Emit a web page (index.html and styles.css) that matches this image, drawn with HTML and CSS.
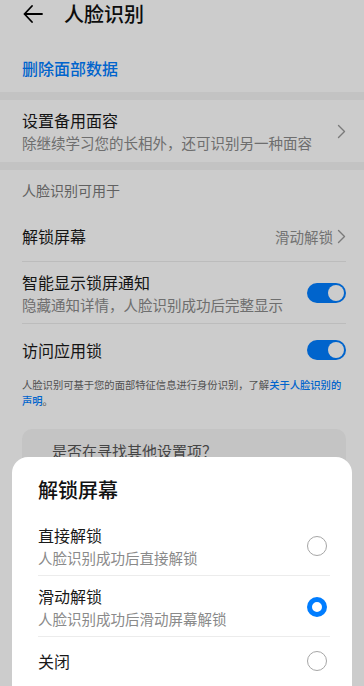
FILE: index.html
```html
<!DOCTYPE html>
<html lang="zh">
<head>
<meta charset="utf-8">
<link rel="stylesheet" href="styles.css">
</head>
<body>
<div class="screen">
  <div class="page">
    <header class="header">
      <svg class="back" width="20" height="18" viewBox="0 0 20 18"><path d="M9 1 L1.5 9 L9 17 M1.5 9 H19" fill="none" stroke="#000" stroke-width="1.8" stroke-linecap="round" stroke-linejoin="round"/></svg>
      <span class="title">人脸识别</span>
    </header>
    <div class="link-row">删除面部数据</div>
    <div class="band"></div>
    <div class="row row-two">
      <div class="texts">
        <div class="main">设置备用面容</div>
        <div class="sub">除继续学习您的长相外，还可识别另一种面容</div>
      </div>
      <svg class="chev" width="9" height="15" viewBox="0 0 9 15"><path d="M1.5 1.5 L7.5 7.5 L1.5 13.5" fill="none" stroke="#999" stroke-width="1.4" stroke-linecap="round" stroke-linejoin="round"/></svg>
    </div>
    <div class="band"></div>
    <div class="section-head">人脸识别可用于</div>
    <div class="group">
      <div class="row row-one divided">
        <div class="main">解锁屏幕</div>
        <div class="value">滑动解锁
          <svg class="chev small" width="9" height="15" viewBox="0 0 9 15"><path d="M1.5 1.5 L7.5 7.5 L1.5 13.5" fill="none" stroke="#999" stroke-width="1.4" stroke-linecap="round" stroke-linejoin="round"/></svg>
        </div>
      </div>
      <div class="row row-two divided">
        <div class="texts">
          <div class="main">智能显示锁屏通知</div>
          <div class="sub">隐藏通知详情，人脸识别成功后完整显示</div>
        </div>
        <div class="toggle"><span class="knob"></span></div>
      </div>
      <div class="row row-one last">
        <div class="main">访问应用锁</div>
        <div class="toggle"><span class="knob"></span></div>
      </div>
    </div>
    <p class="note">人脸识别可基于您的面部特征信息进行身份识别，了解<span class="note-link">关于人脸识别的声明</span>。</p>
    <div class="card">是否在寻找其他设置项？</div>
  </div>
  <div class="dim"></div>
  <div class="sheet">
    <div class="sheet-title">解锁屏幕</div>
    <div class="option divided">
      <div class="texts">
        <div class="main">直接解锁</div>
        <div class="sub">人脸识别成功后直接解锁</div>
      </div>
      <span class="radio"></span>
    </div>
    <div class="option divided">
      <div class="texts">
        <div class="main">滑动解锁</div>
        <div class="sub">人脸识别成功后滑动屏幕解锁</div>
      </div>
      <span class="radio on"></span>
    </div>
    <div class="option single">
      <div class="main">关闭</div>
      <span class="radio"></span>
    </div>
  </div>
</div>
</body>
</html>
```

FILE: styles.css
```css
* { box-sizing: border-box; }
html, body { margin: 0; padding: 0; }
body {
  font-family: "Noto Sans CJK SC", "Noto Sans", sans-serif;
  color: #191919;
  background: #fff;
}
.screen {
  position: relative;
  width: 364px;
  height: 686px;
  overflow: hidden;
}
.page {
  background: #ffffff;
  height: 686px;
}
.header {
  display: flex;
  align-items: center;
  height: 28px;
  padding-left: 23px;
}
.back { display: block; }
.title {
  margin-left: 21px;
  font-size: 20px;
  line-height: 28px;
  font-weight: 500;
  color: #111;
}
.link-row {
  height: 64px;
  padding: 0 22px;
  display: flex;
  align-items: center;
  padding-top: 16px;
  font-size: 16px;
  color: #007dff;
  font-weight: 500;
}
.band {
  height: 8px;
  background: #f4f4f4;
}
.row {
  display: flex;
  align-items: center;
  justify-content: space-between;
  padding: 0 18px 0 22px;
}
.row-two { height: 62px; }
.row-one { height: 52px; }
.texts { display: flex; flex-direction: column; }
.main {
  font-size: 16px;
  line-height: 22px;
  color: #191919;
}
.sub {
  font-size: 14.5px;
  line-height: 20px;
  color: #8a8a8a;
  margin-top: 2px;
}
.chev { display: block; margin-top: 0; }
.chev.small { display: inline-block; margin: 0 0 0 4px; vertical-align: -2px; }
.section-head {
  height: 40px;
  padding: 0 22px;
  display: flex;
  align-items: center;
  font-size: 14px;
  color: #7a7a7a;
}
.group { padding: 0; }
.group .divided { position: relative; }
.group .divided::after {
  content: "";
  position: absolute;
  left: 22px;
  right: 18px;
  bottom: 0;
  height: 1px;
  background: #ececec;
}
.value {
  font-size: 14.5px;
  color: #8f8f8f;
  display: flex;
  align-items: center;
}
.toggle {
  width: 39px;
  height: 20px;
  border-radius: 10px;
  background: #007dff;
  position: relative;
  flex: none;
}
.knob {
  position: absolute;
  right: 2px;
  top: 2px;
  width: 16px;
  height: 16px;
  border-radius: 50%;
  background: #fff;
}
.note {
  margin: 0;
  padding: 1px 14px 0 22px;
  font-size: 10.3px;
  line-height: 16px;
  color: #666;
}
.note-link { color: #007dff; font-weight: 500; }
.card {
  margin: 20px 18px 0 22px;
  height: 120px;
  border-radius: 10px;
  background: #f6f6f6;
  padding: 11px 0 0 30px;
  font-size: 15px;
  line-height: 22px;
  color: #555;
}
.dim {
  position: absolute;
  inset: 0;
  background: rgba(0, 0, 0, 0.2);
}
.sheet {
  position: absolute;
  left: 12px;
  right: 12px;
  top: 457px;
  height: 260px;
  background: #fff;
  border-radius: 16px 16px 0 0;
  padding: 19px 25px 0 26px;
}
.sheet-title {
  font-size: 20px;
  line-height: 28px;
  font-weight: 500;
  color: #111;
  margin-bottom: 11px;
}
.option {
  display: flex;
  align-items: center;
  justify-content: space-between;
  height: 61px;
  position: relative;
}
.option:first-of-type { height: 62px; }
.option.divided::after {
  content: "";
  position: absolute;
  left: 0;
  right: -3px;
  bottom: 0;
  height: 1px;
  background: #ececec;
}
.option.single { height: 48px; }
.radio {
  width: 20px;
  height: 20px;
  border-radius: 50%;
  border: 1.2px solid #a6a6a6;
  flex: none;
}
.radio.on {
  border: 5px solid #007dff;
}
```
